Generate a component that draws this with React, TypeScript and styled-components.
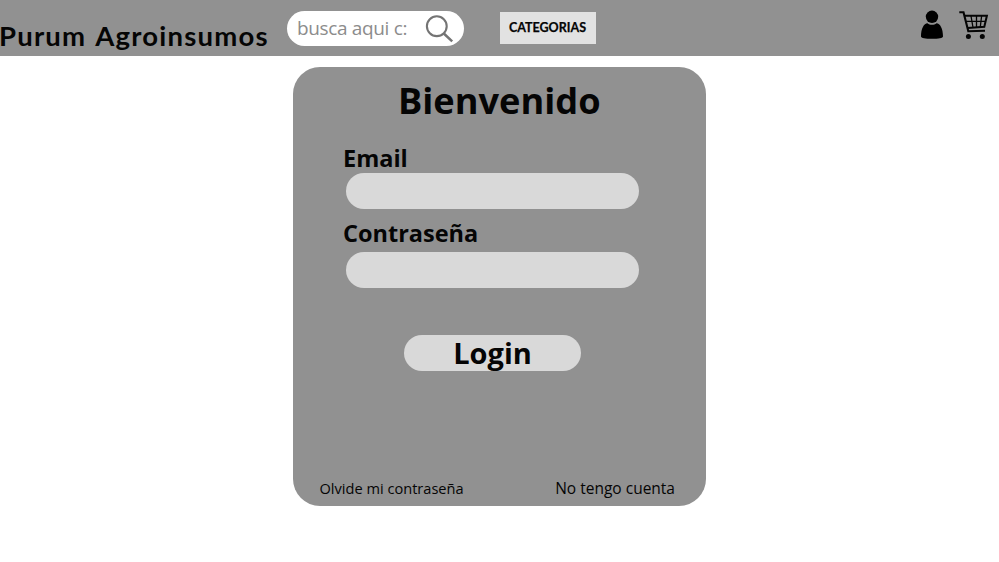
import React from "react";
import styled, { createGlobalStyle } from "styled-components";

const GlobalStyle = createGlobalStyle`
  *, *::before, *::after { box-sizing: border-box; }
  body { margin: 0; background: #fff; color: #050505; font-family: "Open Sans", sans-serif; }
  input, button { font: inherit; color: inherit; border: 0; outline: 0; padding: 0; margin: 0; }
`;

const Header = styled.header`
  display: flex;
  align-items: flex-start;
  height: 56px;
  background: #919191;
`;

const Brand = styled.div`
  width: 287px;
  padding-top: 18px;
  font-family: Lato, sans-serif;
  font-size: 27.5px;
  line-height: 36px;
  font-weight: 700;
  letter-spacing: 1.2px;
  word-spacing: 2px;
  text-indent: -1px;
  white-space: nowrap;
`;

const Search = styled.div`
  display: flex;
  width: 177px;
  height: 35px;
  margin-top: 10.5px;
  padding-left: 10px;
  border-radius: 18px;
  background: #fff;
`;

const SearchText = styled.span`
  width: 128px;
  font-size: 19px;
  letter-spacing: -0.35px;
  line-height: 35px;
  color: #8c8c8c;
  white-space: nowrap;
`;

const Categories = styled.button`
  width: 96px;
  height: 32px;
  margin: 12px 0 0 35.5px;
  background: #e2e2e2;
  font-family: Lato, sans-serif;
  font-size: 12.5px;
  font-weight: 700;
  -webkit-text-stroke: 0.25px #050505;
  line-height: 30px;
`;

const Actions = styled.nav`
  display: flex;
  gap: 15px;
  margin: 10px 10px 0 auto;
`;

const Card = styled.main`
  display: flex;
  flex-direction: column;
  width: 413px;
  height: 439px;
  margin: 11px auto 0;
  padding: 10px 31px 8px 26.5px;
  border-radius: 27px;
  background: #919191;
`;

const Title = styled.h1`
  margin: 0 0 18px;
  padding-left: 4px;
  font-size: 36.2px;
  line-height: 47px;
  height: 48px;
  font-weight: 700;
  text-align: center;
`;

const Field = styled.label<{ $gap: number }>`
  display: flex;
  flex-direction: column;
  gap: ${(p) => p.$gap}px;
  width: 296px;
  margin: 0 0 9px 23.5px;
  font-size: 23.5px;
  line-height: 30px;
  font-weight: 700;
`;

const Input = styled.input`
  width: 293px;
  height: 36px;
  margin-left: 2.8px;
  padding: 0 18px;
  border-radius: 18px;
  background: #d9d9d9;
`;

const Login = styled.button`
  width: 177px;
  height: 36px;
  margin: 38px 0 0 84.5px;
  border-radius: 18px;
  background: #d9d9d9;
  font-size: 29px;
  line-height: 36px;
  font-weight: 700;
`;

const Links = styled.div`
  display: flex;
  justify-content: space-between;
  margin-top: auto;
`;

const TextLink = styled.a<{ $size: number }>`
  font-size: ${(p) => p.$size}px;
  line-height: 20px;
  white-space: nowrap;
`;

const SearchIcon = () => (
  <svg width="30" height="35" viewBox="0 0 30 35" fill="none" stroke="#747474">
    <circle cx="11.8" cy="15.2" r="9.9" strokeWidth="2.1" />
    <path d="M18.8 22.5 27.2 30.3" strokeWidth="2.5" />
  </svg>
);

const UserIcon = () => (
  <svg width="23" height="30" viewBox="0 0 23 30">
    <circle cx="11" cy="6.8" r="6.2" />
    <path d="M0 26.5C0 18.5 3 13.2 6.5 13.2c1.3 1 2.7 1.5 4.5 1.5s3.2-.5 4.5-1.5C19 13.2 22 18.5 22 26.5c0 1.5-4.5 2.300-11 2.300S0 28 0 26.500Z" />
  </svg>
);

const CartIcon = () => (
  <svg width="30" height="30" viewBox="0 0 30 30" fill="none" stroke="#050505">
    <path d="M.3 2.2H4.500L9.300 21.300 26 20.800" strokeWidth="2.100" />
    <path d="M5.500 5.800H27.900L25.300 16.700 8.500 18" strokeWidth="2" />
    <path d="M7 11.300H26.500M12 6 14 17.500M17.500 6V17M22.600 6 21.300 17" strokeWidth="1.300" />
    <circle cx="9.400" cy="26.500" r="2.500" fill="#050505" stroke="none" />
    <circle cx="23.300" cy="26.500" r="2.500" fill="#050505" stroke="none" />
  </svg>
);

export default function App() {
  return (
    <>
      <GlobalStyle />
      <Header>
        <Brand>Purum Agroinsumos</Brand>
        <Search>
          <SearchText>busca aqui c:</SearchText>
          <SearchIcon />
        </Search>
        <Categories>CATEGORIAS</Categories>
        <Actions>
          <UserIcon />
          <CartIcon />
        </Actions>
      </Header>
      <Card>
        <Title>Bienvenido</Title>
        <Field $gap={0}>
          Email
          <Input type="email" />
        </Field>
        <Field $gap={4}>
          Contraseña
          <Input type="password" />
        </Field>
        <Login>Login</Login>
        <Links>
          <TextLink $size={14.6}>Olvide mi contraseña</TextLink>
          <TextLink $size={15.5}>No tengo cuenta</TextLink>
        </Links>
      </Card>
    </>
  );
}
